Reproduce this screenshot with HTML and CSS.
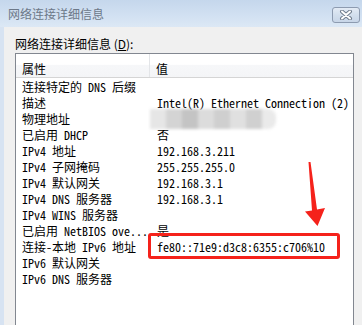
FILE: index.html
```html
<!DOCTYPE html>
<html lang="zh-CN">
<head>
<meta charset="utf-8">
<link rel="stylesheet" href="styles.css">
</head>
<body>
<div class="window">
  <div class="titlebar">
    <span class="title">网络连接详细信息</span>
    <div class="close">
      <svg width="14" height="10" viewBox="0 0 14 10">
        <path d="M3 1.5 L11 8.5 M11 1.5 L3 8.5" stroke="#6f7c8c" stroke-width="4" stroke-linecap="round"/>
        <path d="M3 1.5 L11 8.5 M11 1.5 L3 8.5" stroke="#ffffff" stroke-width="2" stroke-linecap="round"/>
      </svg>
    </div>
  </div>
  <div class="body">
    <div class="label">网络连接详细信息 (<u>D</u>):</div>
    <div class="list">
      <div class="header">
        <div class="hcol hname">属性</div>
        <div class="hcol hval">值</div>
      </div>
      <div class="rows">
        <div class="row"><span class="k">连接特定的 DNS 后缀</span><span class="v"></span></div>
        <div class="row"><span class="k">描述</span><span class="v">Intel(R) Ethernet Connection (2)</span></div>
        <div class="row"><span class="k">物理地址</span><span class="v"><span class="blur"><i class="b1"></i><i class="b2"></i><i class="b3"></i><i class="b4"></i><i class="b5"></i><i class="b6"></i><i class="b7"></i><i class="b8"></i></span></span></div>
        <div class="row"><span class="k">已启用 DHCP</span><span class="v">否</span></div>
        <div class="row"><span class="k">IPv4 地址</span><span class="v">192.168.3.211</span></div>
        <div class="row"><span class="k">IPv4 子网掩码</span><span class="v">255.255.255.0</span></div>
        <div class="row"><span class="k">IPv4 默认网关</span><span class="v">192.168.3.1</span></div>
        <div class="row"><span class="k">IPv4 DNS 服务器</span><span class="v">192.168.3.1</span></div>
        <div class="row"><span class="k">IPv4 WINS 服务器</span><span class="v"></span></div>
        <div class="row"><span class="k">已启用 NetBIOS ove...</span><span class="v">是</span></div>
        <div class="row"><span class="k">连接-本地 IPv6 地址</span><span class="v">fe80::71e9:d3c8:6355:c706%10</span></div>
        <div class="row"><span class="k">IPv6 默认网关</span><span class="v"></span></div>
        <div class="row"><span class="k">IPv6 DNS 服务器</span><span class="v"></span></div>
      </div>
    </div>
  </div>
  <div class="highlight"></div>
  <svg class="arrow" width="362" height="325" viewBox="0 0 362 325">
    <polygon points="308.5,162 310.5,162 317,209.5 325,208 317.5,226 305,211.5 312,210.5" fill="#f5221b"/>
  </svg>
</div>
</body>
</html>
```
FILE: styles.css
```css
html, body {
  margin: 0;
  padding: 0;
  background: #f0f0f0;
}
.window {
  position: relative;
  width: 362px;
  height: 325px;
  overflow: hidden;
  background: #f0f0f0;
}
.titlebar {
  height: 27px;
  background: linear-gradient(to bottom, #c5d7ec 0%, #d2e1f2 60%, #dce8f5 100%);
  display: flex;
  align-items: flex-start;
  justify-content: space-between;
  box-sizing: border-box;
  padding: 7px 2px 0 8px;
}
.title {
  font-family: "Noto Sans CJK SC", sans-serif;
  font-size: 12px;
  line-height: 14px;
  color: #6c7888;
}
.close {
  width: 28px;
  height: 16px;
  box-sizing: border-box;
  border: 1px solid #8d9bb0;
  border-radius: 3px;
  background: linear-gradient(to bottom, #e3ebf5 0%, #d3dfed 50%, #c8d6e8 100%);
  display: flex;
  align-items: center;
  justify-content: center;
}
.body {
  height: 298px;
  box-sizing: border-box;
  border-left: 4px solid #d7e3f2;
  padding: 10px 8px 0 11px;
}
.label {
  font-family: "Noto Sans CJK SC", sans-serif;
  font-size: 12px;
  line-height: 14px;
  height: 14px;
  color: #000;
  margin-bottom: 2px;
}
.label u {
  text-decoration: underline;
}
.list {
  width: 339px;
  height: 290px;
  box-sizing: border-box;
  border: 1px solid #828790;
  background: #fff;
}
.header {
  height: 24px;
  box-sizing: border-box;
  border-bottom: 1px solid #d5d5d5;
  background: linear-gradient(to bottom, #ffffff 0%, #ffffff 45%, #f6f7f9 50%, #f4f5f7 100%);
  display: flex;
}
.hcol {
  font-family: "Noto Sans CJK SC", sans-serif;
  font-size: 12px;
  line-height: 14px;
  color: #000;
  padding: 8px 0 0 6px;
  box-sizing: border-box;
}
.hname {
  width: 134px;
  border-right: 1px solid #e3e5e8;
}
.hval {
  flex: 1;
}
.rows {
  padding-top: 1px;
  font-family: "Noto Sans Mono CJK SC", "Liberation Mono", "Noto Sans CJK SC", monospace;
  font-size: 12px;
  color: #000;
}
.row {
  height: 16px;
  line-height: 16px;
  display: flex;
  white-space: pre;
}
.k {
  width: 134px;
  padding-left: 6px;
  box-sizing: border-box;
  overflow: hidden;
}
.v {
  padding-left: 7px;
  position: relative;
}
.blur {
  display: flex;
  margin-top: -2px;
  margin-left: -7px;
  height: 20px;
  filter: blur(1.5px);
}
.blur i {
  display: block;
  width: 16px;
  height: 20px;
}
.blur .b1 { background: #e6e6e6; }
.blur .b2 { background: #d4d4d4; }
.blur .b3 { background: #c4c4c4; }
.blur .b4 { background: #dcdcdc; }
.blur .b5 { background: #cfcfcf; }
.blur .b6 { background: #e0e0e0; }
.blur .b7 { background: #d0d0d0; }
.blur .b8 { background: #eaeaea; width: 14px; border-radius: 0 8px 8px 0; }
.highlight {
  position: absolute;
  left: 148px;
  top: 233px;
  width: 192px;
  height: 26px;
  box-sizing: border-box;
  border: 3px solid #f5221b;
  border-radius: 3px;
}
.arrow {
  position: absolute;
  left: 0;
  top: 0;
}
```
